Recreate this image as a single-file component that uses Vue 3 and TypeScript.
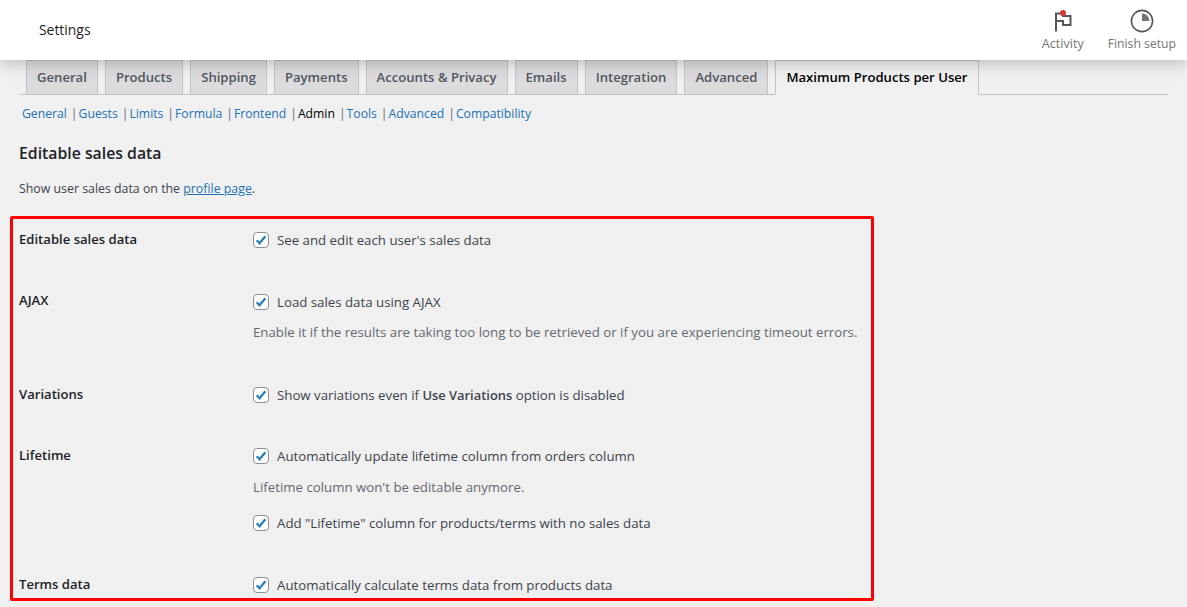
<script setup lang="ts">
const tabs = ['General','Products','Shipping','Payments','Accounts & Privacy','Emails','Integration','Advanced','Maximum Products per User']
const subs = ['General','Guests','Limits','Formula','Frontend','Admin','Tools','Advanced','Compatibility']
</script>

<template>
  <div class="page">
    <header class="bar">
      <div class="title">Settings</div>
      <div class="actions">
        <div class="action activity">
          <span class="icon-wrap">
            <svg width="24" height="24" viewBox="0 0 24 24" fill="none" stroke="#50575e" stroke-width="2">
              <path d="M5 22.5V4.5h6l1 2.5h7.5v9H12v-4H5" />
            </svg>
            <span class="dot"></span>
          </span>
          <span>Activity</span>
        </div>
        <div class="action finish">
          <svg width="24" height="24" viewBox="0 0 24 24">
            <circle cx="12" cy="12" r="10.6" fill="none" stroke="#50575e" stroke-width="1.6" />
            <path d="M12 4.5V12h7.5A7.5 7.5 0 0 0 12 4.5z" fill="#757575" />
          </svg>
          <span>Finish setup</span>
        </div>
      </div>
    </header>

    <main class="content">
      <nav class="tabs">
        <a v-for="t in tabs" :key="t" class="tab" :class="{ active: t.startsWith('Maximum') }">{{ t }}</a>
      </nav>
      <ul class="subs">
        <li v-for="(s, i) in subs" :key="s + i">
          <span v-if="i > 0" class="sep">|</span><a :class="{ current: s === 'Admin' }">{{ s }}</a>
        </li>
      </ul>
      <h2>Editable sales data</h2>
      <p class="intro">Show user sales data on the <a class="link">profile page</a>.</p>

      <div class="form">
        <section class="row r1">
          <div class="label">Editable sales data</div>
          <div class="field"><label class="check"><i class="box"><svg viewBox="0 0 16 16"><path d="M3 8.3l3.3 3.4L13 3.6" /></svg></i>See and edit each user's sales data</label></div>
        </section>
        <section class="row r2">
          <div class="label">AJAX</div>
          <div class="field">
            <label class="check"><i class="box"><svg viewBox="0 0 16 16"><path d="M3 8.3l3.3 3.4L13 3.6" /></svg></i>Load sales data using AJAX</label>
            <p class="desc">Enable it if the results are taking too long to be retrieved or if you are experiencing timeout errors.</p>
          </div>
        </section>
        <section class="row r3">
          <div class="label">Variations</div>
          <div class="field"><label class="check"><i class="box"><svg viewBox="0 0 16 16"><path d="M3 8.3l3.3 3.4L13 3.6" /></svg></i><span>Show variations even if <b>Use Variations</b> option is disabled</span></label></div>
        </section>
        <section class="row r4">
          <div class="label">Lifetime</div>
          <div class="field">
            <label class="check"><i class="box"><svg viewBox="0 0 16 16"><path d="M3 8.3l3.3 3.4L13 3.6" /></svg></i>Automatically update lifetime column from orders column</label>
            <p class="desc d2">Lifetime column won't be editable anymore.</p>
            <label class="check second"><i class="box"><svg viewBox="0 0 16 16"><path d="M3 8.3l3.3 3.4L13 3.6" /></svg></i>Add "Lifetime" column for products/terms with no sales data</label>
          </div>
        </section>
        <section class="row r5">
          <div class="label">Terms data</div>
          <div class="field"><label class="check"><i class="box"><svg viewBox="0 0 16 16"><path d="M3 8.3l3.3 3.4L13 3.6" /></svg></i>Automatically calculate terms data from products data</label></div>
        </section>
      </div>
    </main>
    <div class="highlight"></div>
  </div>
</template>

<style>
html, body { margin: 0; background: #f0f0f1; }
</style>

<style scoped>
.page {
  position: relative;
  width: 1187px;
  height: 607px;
  overflow: hidden;
  background: #f0f0f1;
  font-family: "Open Sans", "Noto Sans", sans-serif;
  font-size: 13.25px;
  color: #3c434a;
}
.bar {
  position: relative;
  z-index: 2;
  height: 60px;
  background: #fff;
  box-shadow: 0 0 18px rgba(0, 0, 0, .3);
  display: flex;
  justify-content: space-between;
}
.title { padding: 21px 0 0 39px; font-size: 13.9px; line-height: 17px; color: #1e1e1e; font-weight: 500; }
.actions { display: flex; padding-right: 11px; gap: 24px; }
.action { display: flex; flex-direction: column; align-items: center; padding-top: 9px; color: #757575; font-size: 12.2px; line-height: 16px; gap: 3px; }
.activity { font-size: 12.6px; }
.icon-wrap { position: relative; display: block; height: 24px; width: 24px; }
.action svg { display: block; }
.dot { position: absolute; top: 1px; right: 9px; width: 6px; height: 6px; border-radius: 50%; background: #d63638; }
.content { padding: 0 19px; }
.tabs {
  display: flex;
  height: 35px;
  box-sizing: border-box;
  width: 1149px;
  padding-left: 7px;
  gap: 7px;
  border-bottom: 1px solid #c3c4c7;
}
.tab {
  height: 35px;
  box-sizing: border-box;
  padding: 0 10px;
  background: #dcdcde;
  border: 1px solid #c3c4c7;
  color: #50575e;
  font-size: 13.11px;
  font-weight: 600;
  line-height: 33px;
  white-space: nowrap;
}
.tab.active { background: #f0f0f1; border-bottom-color: #f0f0f1; color: #000; }
.subs { list-style: none; display: flex; margin: 0; padding: 10px 0 0 3px; height: 18px; line-height: 18px; color: #646970; font-size: 12.2px; }
.subs a { color: #2271b1; }
.subs a.current { color: #000; font-weight: 500; }
.subs li { white-space: nowrap; }
.sep { margin: 0 1px 0 4px; }
h2 { margin: 20px 0 0; font-size: 15.8px; line-height: 20px; font-weight: 600; color: #1d2327; }
.intro { margin: 17px 0 0; line-height: 18px; font-size: 12.35px; }
.link { color: #2271b1; text-decoration: underline; }
.form { margin-top: 33px; }
.row { display: flex; padding-bottom: 44px; }
.r2 { padding-bottom: 45px; }
.r3 { padding-bottom: 43px; }
.label { width: 234px; flex: none; font-weight: 600; color: #1d2327; line-height: 18px; margin-top: -1px; font-size: 13.1px; }
.r2 .label { margin-top: -2px; }
.field { flex: 1; }
.check { display: flex; align-items: center; height: 18px; line-height: 18px; white-space: nowrap; }
.check b { font-weight: 600; font-size: 12.9px; }
.box {
  flex: none;
  width: 16px;
  height: 16px;
  box-sizing: border-box;
  margin-right: 8px;
  background: #fff;
  border: 1px solid #8c8f94;
  border-radius: 4px;
  display: block;
}
.box svg { display: block; width: 14px; height: 14px; fill: none; stroke: #2c7fc0; stroke-width: 2.6; }
.desc { margin: 12px 0 0; line-height: 18px; color: #646970; }
.d2 { margin-top: 13px; }
.second { margin-top: 18px; }
.highlight {
  position: absolute;
  left: 10px;
  top: 216px;
  width: 864px;
  height: 385px;
  box-sizing: border-box;
  border: 3px solid #f00;
  border-radius: 2px;
  z-index: 3;
}
</style>
